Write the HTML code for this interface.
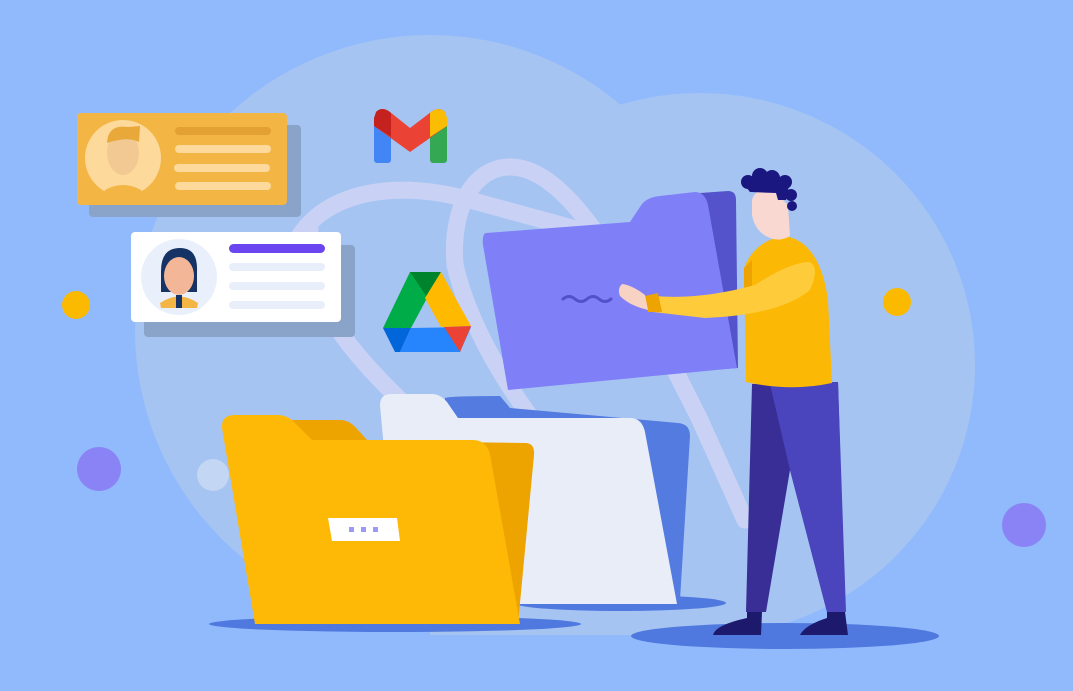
<!DOCTYPE html>
<html><head><meta charset="utf-8"><style>html,body{margin:0;padding:0;background:#91bafd;overflow:hidden}svg{display:block}</style></head>
<body>
<svg width="1073" height="691" viewBox="0 0 1073 691" xmlns="http://www.w3.org/2000/svg">
<rect width="1073" height="691" fill="#91bafd"/>
<!-- blob -->
<circle cx="430" cy="330" r="295" fill="#a6c4f2"/>
<ellipse cx="700" cy="365" rx="275" ry="272" fill="#a6c4f2"/>
<rect x="430" y="400" width="300" height="235" fill="#a6c4f2"/>
<!-- loops -->
<g fill="none" stroke="#c9d2f5" stroke-width="17" stroke-linecap="round">
<path d="M300 235 C330 190 400 180 470 200 C560 225 620 240 640 250"/>
<path d="M310 230 C300 300 360 360 400 400"/>
<path d="M455 265 C450 200 480 160 520 168 C580 180 640 300 700 420 L745 520"/>
<path d="M455 265 C470 330 510 390 540 430"/>
</g>
<!-- dots -->
<circle cx="76" cy="305" r="14" fill="#fbba00"/>
<circle cx="897" cy="302" r="14" fill="#fbba00"/>
<circle cx="99" cy="469" r="22" fill="#8983f5"/>
<circle cx="1024" cy="525" r="22" fill="#8983f5"/>
<circle cx="213" cy="475" r="16" fill="#c3d6f3"/>
<!-- card 1 -->
<rect x="89" y="125" width="212" height="92" rx="4" fill="#8aa3c8"/>
<rect x="77" y="113" width="210" height="92" rx="4" fill="#f3b645"/>
<circle cx="123" cy="158" r="38" fill="#fdd99b"/>
<path d="M105 190 Q123 180 141 190 L143 196 Q123 201 103 196Z" fill="#f3b645"/>
<ellipse cx="123" cy="153" rx="16" ry="22" fill="#f3c993"/>
<path d="M107 143 Q108 124 128 127 L140 126 L139 142 Q128 136 107 143Z" fill="#e9a93a"/>
<rect x="175" y="127" width="96" height="8" rx="4" fill="#e3a033"/>
<rect x="175" y="145" width="96" height="8" rx="4" fill="#fdd99b"/>
<rect x="174" y="164" width="96" height="8" rx="4" fill="#fdd99b"/>
<rect x="175" y="182" width="96" height="8" rx="4" fill="#fdd99b"/>
<!-- card 2 -->
<rect x="144" y="245" width="211" height="92" rx="4" fill="#8aa3c8"/>
<rect x="131" y="232" width="210" height="90" rx="4" fill="#ffffff"/>
<circle cx="179" cy="277" r="38" fill="#e9f0fc"/>
<path d="M161 271 Q161 248 180 248 Q198 248 197 271 L197 292 L161 292Z" fill="#163366"/>
<ellipse cx="179" cy="276" rx="15" ry="19" fill="#f3b697"/>
<path d="M160 303 Q179 290 198 303 L197 308 L161 308Z" fill="#f3b645"/>
<rect x="176" y="295" width="6" height="13" fill="#163366"/>
<rect x="229" y="244" width="96" height="9" rx="4.5" fill="#6b45f0"/>
<rect x="229" y="263" width="96" height="8" rx="4" fill="#e9effa"/>
<rect x="229" y="282" width="96" height="8" rx="4" fill="#e9effa"/>
<rect x="229" y="301" width="96" height="8" rx="4" fill="#e9effa"/>
<!-- gmail -->
<rect x="374" y="118" width="17" height="45" rx="3" fill="#4285f4"/>
<rect x="430" y="118" width="17" height="45" rx="3" fill="#34a853"/>
<path d="M376 112 Q382 106 390 112 L410 128 L431 112 Q439 106 445 112 L447 126 L410 152 L374 126Z" fill="#ea4335"/>
<path d="M376 112 Q382 106 390 112 L391 114 L391 137 L374 126 L374 118Z" fill="#c5221f"/>
<path d="M445 112 Q439 106 431 112 L430 113 L430 137 L447 126 L447 118Z" fill="#fbbc04"/>
<!-- drive -->
<path d="M410 272 L441 272 L411 328 L383 328Z" fill="#00ac47"/>
<path d="M410 272 L441 272 L427 297Z" fill="#00832d"/>
<path d="M441 272 L471 326 L441 327 L425 298Z" fill="#ffba00"/>
<path d="M383 328 L411 328 L400 352 L395 352Z" fill="#0066da"/>
<path d="M411 328 L471 327 L460 352 L400 352Z" fill="#2684fc"/>
<path d="M444 327 L471 326 L460 352Z" fill="#ea4335"/>
<!-- back folders -->
<ellipse cx="620" cy="603" rx="106" ry="8" fill="#5079e0"/>
<path d="M445 398 Q450 396 500 396 L510 408 L678 423 Q690 424 690 436 L680 600 L440 600Z" fill="#537be0"/>
<path d="M380 405 Q380 394 392 394 L432 394 Q440 394 447 402 L458 418 L630 418 Q642 418 645 432 L677 604 L398 604 Z" fill="#e8edf8"/>
<!-- yellow folder -->
<ellipse cx="395" cy="624" rx="186" ry="8" fill="#5079e0"/>
<path d="M290 420 L340 420 Q350 420 358 430 L368 441 L525 443 Q535 443 534 455 L518 624 L290 624Z" fill="#eda300"/>
<path d="M222 428 Q221 415 235 415 L278 415 Q288 415 296 424 L312 440 L473 440 Q486 440 490 454 L520 624 L255 624Z" fill="#fdb906"/>
<path d="M328 518 L397 518 L400 541 L332 541Z" fill="#fff"/>
<rect x="349" y="527" width="5" height="5" fill="#9d9af7"/>
<rect x="361" y="527" width="5" height="5" fill="#9d9af7"/>
<rect x="373" y="527" width="5" height="5" fill="#9d9af7"/>
<!-- man shadow -->
<ellipse cx="785" cy="636" rx="154" ry="13" fill="#5079e0"/>
<!-- purple folder -->
<path d="M700 193 L728 191 Q736 191 736 200 L738 368 L710 370Z" fill="#5553cc"/>
<path d="M486 233 L630 222 L642 204 Q648 197 660 196 L695 192 Q705 192 708 205 L737 368 L508 390 L483 245 Q482 234 486 233Z" fill="#7f7ff8"/>
<path d="M563 299 q6 -5 12 0 t12 0 t12 0 t12 0" fill="none" stroke="#5351c9" stroke-width="3" stroke-linecap="round"/>
<!-- man -->
<path d="M752 384 L838 382 L845 612 L827 612 L790 470 L766 612 L746 612 Z" fill="#382e96"/>
<path d="M770 384 L838 382 L846 612 L827 612 L790 470 Z" fill="#4a45bd"/>
<path d="M744 268 Q755 240 785 236 Q820 242 828 300 L832 383 Q790 392 746 382 Z" fill="#fbb906"/>
<path d="M744 268 L752 260 L752 300 L744 296Z" fill="#eda300"/>
<path d="M655 296 Q700 300 755 285 Q790 262 810 262 Q820 268 810 290 Q780 315 705 318 L653 312Z" fill="#fecb3b"/>
<path d="M645 296 L658 293 L662 312 L648 312Z" fill="#eda300"/>
<path d="M622 284 Q632 285 645 295 L648 310 Q630 306 620 296 Q617 289 622 284Z" fill="#f8d2c3"/>
<path d="M752 200 Q756 186 775 192 L788 205 L790 236 Q780 242 770 238 Q755 232 752 215Z" fill="#f8d8d0"/>
<g fill="#1a1780">
<circle cx="748" cy="182" r="7"/><circle cx="760" cy="176" r="8"/><circle cx="772" cy="178" r="8"/><circle cx="785" cy="182" r="7"/>
<circle cx="791" cy="195" r="6"/><circle cx="792" cy="206" r="5"/>
<path d="M742 182 L790 180 L786 200 L778 200 L776 193 L750 192Z"/>
</g>
<path d="M747 612 L762 612 L761 635 L713 635 Q715 625 747 618Z" fill="#1d1a6e"/>
<path d="M827 612 L845 612 L848 635 L800 635 Q805 625 827 618Z" fill="#1d1a6e"/>
</svg>
</body></html>
